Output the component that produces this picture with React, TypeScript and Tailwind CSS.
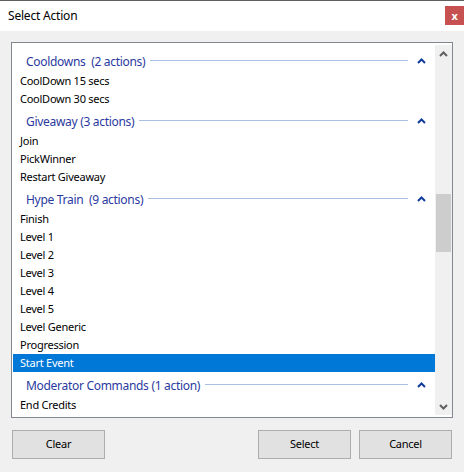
import React from "react";

type Group = { title: string; items: string[] };

const groups: Group[] = [
  { title: "Cooldowns  (2 actions)", items: ["CoolDown 15 secs", "CoolDown 30 secs"] },
  { title: "Giveaway (3 actions)", items: ["Join", "PickWinner", "Restart Giveaway"] },
  {
    title: "Hype Train  (9 actions)",
    items: ["Finish", "Level 1", "Level 2", "Level 3", "Level 4", "Level 5", "Level Generic", "Progression", "Start Event"],
  },
  { title: "Moderator Commands (1 action)", items: ["End Credits"] },
];

const selected = "Start Event";

function Caret({ className }: { className?: string }) {
  return (
    <svg width="9" height="6" viewBox="0 0 9 6" className={className}>
      <path d="M1 5 L4.5 1.5 L8 5" fill="none" stroke="currentColor" strokeWidth="2" />
    </svg>
  );
}

function GroupHeader({ title }: { title: string }) {
  return (
    <div className="h-[24px] flex items-center pl-[13px] pr-[9px] pt-[1px]">
      <span className="text-[12px] tracking-[-0.3px] text-[#2a3aa0] whitespace-pre leading-none pt-[2px]">{title}</span>
      <div className="flex-1 h-px bg-[#a9bfe3] ml-[5px] mr-[9px]" />
      <Caret className="text-[#123c9c]" />
    </div>
  );
}

export default function App() {
  return (
    <div
      className="w-[464px] h-[472px] bg-[#f0f0f0] border-t border-[#5f5f5f] flex flex-col text-[11px] tracking-[-0.25px] text-black"
      style={{ fontFamily: '"Noto Sans", "Liberation Sans", sans-serif' }}
    >
      {/* title bar */}
      <div className="h-[30px] bg-white flex items-center justify-between pl-[8px] shrink-0">
        <span className="text-[12px] tracking-[-0.2px] leading-none">Select Action</span>
        <div className="w-[19px] h-[19px] bg-[#c75050] text-white text-[11px] font-bold flex items-center justify-center leading-none mt-[-2px]">
          x
        </div>
      </div>

      {/* list */}
      <div className="mt-[11px] ml-[11px] w-[442px] h-[376px] border border-[#828790] bg-white flex shrink-0">
        <div className="flex-1 pl-px pt-[5px] min-w-0">
          {groups.map((g) => (
            <div key={g.title}>
              <GroupHeader title={g.title} />
              {g.items.map((it) => (
                <div
                  key={it}
                  className={`h-[18px] flex items-center pl-[7px] pb-[2px] leading-none ${
                    it === selected ? "bg-[#0078d7] text-white" : ""
                  }`}
                >
                  {it}
                </div>
              ))}
            </div>
          ))}
        </div>
        {/* scrollbar */}
        <div className="w-[17px] my-[2px] bg-[#f0f0f0] flex flex-col items-center">
          <div className="h-[17px] flex items-center justify-center text-[#606060]">
            <Caret />
          </div>
          <div className="flex-1 w-full">
            <div className="mt-[132px] mx-auto w-[15px] h-[58px] bg-[#cdcdcd]" />
          </div>
          <div className="h-[17px] flex items-center justify-center text-[#606060]">
            <Caret className="rotate-180" />
          </div>
        </div>
      </div>

      {/* buttons */}
      <div className="mt-[12px] px-[12px] flex">
        <button className="w-[93px] h-[29px] bg-[#e1e1e1] border border-[#adadad]">Clear</button>
        <div className="flex-1" />
        <button className="w-[93px] h-[29px] bg-[#e1e1e1] border border-[#adadad]">Select</button>
        <button className="ml-[8px] w-[93px] h-[29px] bg-[#e1e1e1] border border-[#adadad]">Cancel</button>
      </div>
    </div>
  );
}
